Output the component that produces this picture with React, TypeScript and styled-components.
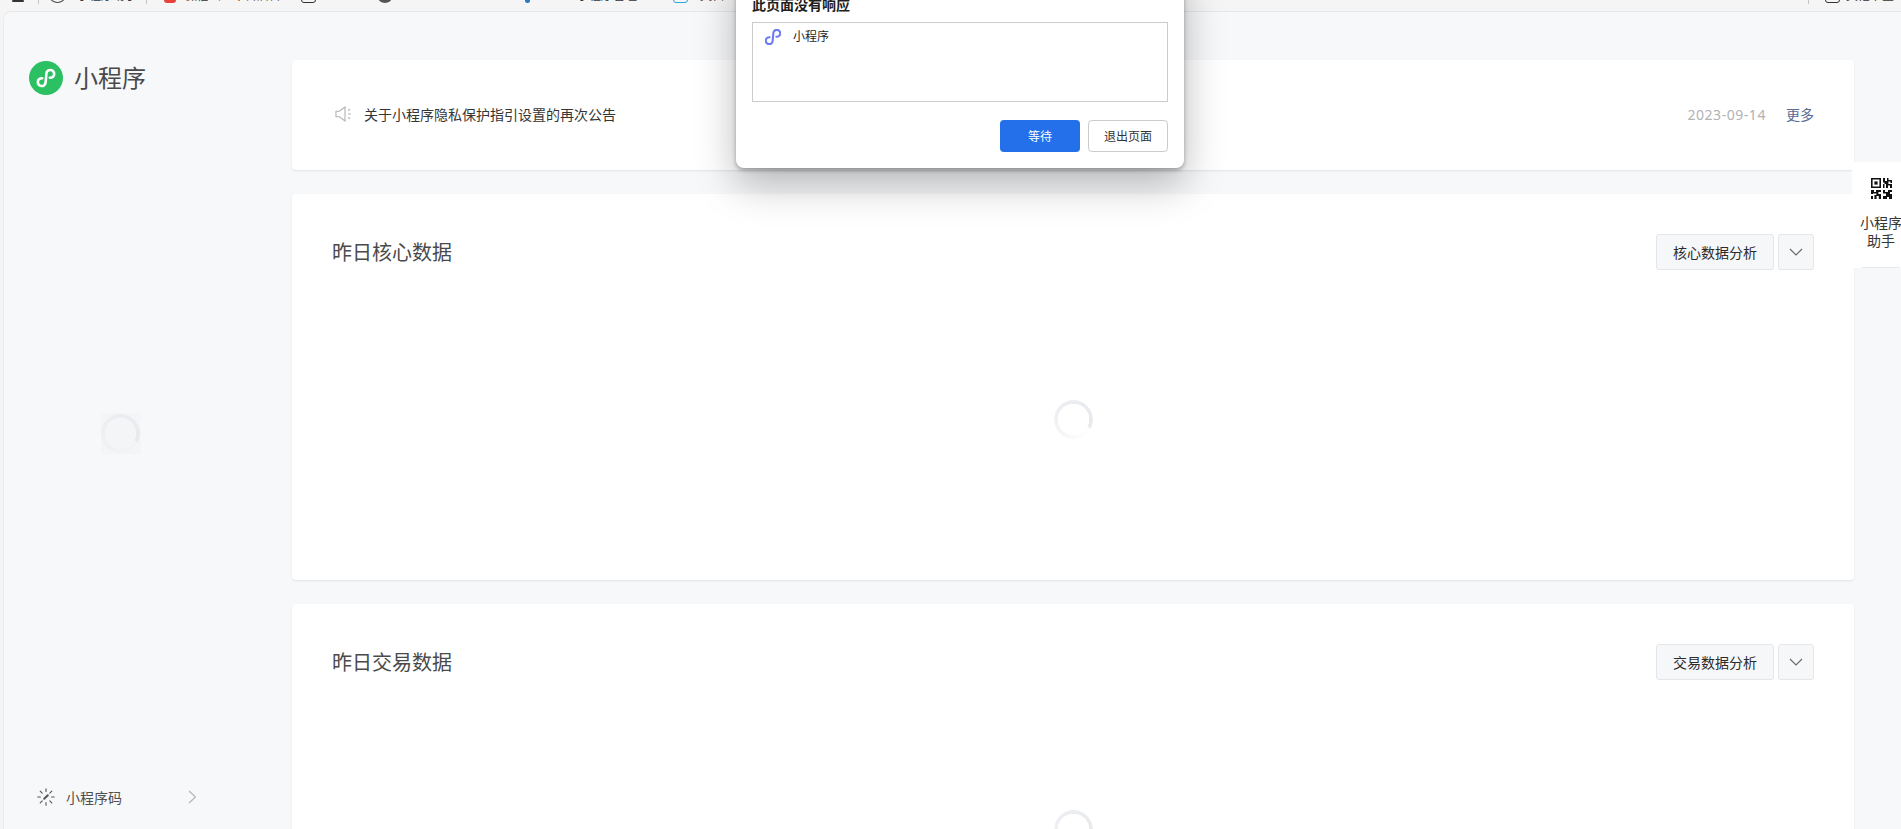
import React from 'react'
import styled, { createGlobalStyle } from 'styled-components'

const GlobalStyle = createGlobalStyle`
  html, body { margin: 0; padding: 0; background: #f5f5f5; }
  * { box-sizing: border-box; }
  body { font-family: "Noto Sans", "Noto Sans CJK SC", sans-serif; }
`

const Screen = styled.div`
  position: relative;
  width: 1901px;
  height: 829px;
  overflow: hidden;
  display: flex;
  flex-direction: column;
  background: #f5f5f5;
`

const BookmarkBar = styled.div`
  height: 11px;
  flex: none;
  display: flex;
  align-items: flex-start;
  overflow: hidden;
`

const BarSlot = styled.div<{ $gap: number; $auto?: boolean }>`
  margin-left: ${p => (p.$auto ? 'auto' : `${p.$gap}px`)};
  flex: none;
`

const BarSep = styled(BarSlot)`
  width: 1px;
  height: 4px;
  background: #c4c4c4;
`

const BarText = styled(BarSlot)<{ $w: number }>`
  width: ${p => p.$w}px;
  margin-top: -11px;
  height: 14px;
  font-size: 12px;
  line-height: 13px;
  color: #333;
  white-space: nowrap;
  overflow: hidden;
`

const BarIcon = styled(BarSlot)<{ $w: number; $h: number; $color: string; $outline?: boolean; $round?: boolean }>`
  width: ${p => p.$w}px;
  height: ${p => p.$h}px;
  margin-top: ${p => (p.$h < 5 ? 0 : -(p.$h - 3))}px;
  border-radius: ${p => (p.$round ? '50%' : '3px')};
  background: ${p => (p.$outline ? 'transparent' : p.$color)};
  border: ${p => (p.$outline ? `1px solid ${p.$color}` : 'none')};
`

const Page = styled.div`
  flex: 1;
  min-height: 0;
  margin-left: 3px;
  display: flex;
  background: #f7f8fa;
  border-top: 1px solid #e6e7e9;
  border-left: 1px solid #ececee;
  border-top-left-radius: 8px;
`

const Sidebar = styled.aside`
  width: 288px;
  flex: none;
  display: flex;
  flex-direction: column;
`

const Brand = styled.div`
  display: flex;
  align-items: center;
  gap: 11px;
  padding: 49px 0 0 25px;
`

const BrandBadge = styled.div`
  width: 34px;
  height: 34px;
  border-radius: 50%;
  background: #2bc162;
  display: flex;
  align-items: center;
  justify-content: center;
`

const BrandName = styled.h1`
  margin: 0;
  font-size: 24px;
  font-weight: 400;
  line-height: 34px;
  color: #4a4a4a;
`

const SideBody = styled.div`
  flex: 1;
  width: 233px;
  display: flex;
  align-items: center;
  justify-content: center;
`

const SpinnerBack = styled.div`
  width: 40px;
  height: 41px;
  background: #f4f5f7;
  display: flex;
  align-items: center;
  justify-content: center;
`

const Spinner = styled.div`
  width: 39px;
  height: 39px;
  border-radius: 50%;
  background: conic-gradient(from 118deg, rgba(236, 237, 241, 0) 0deg, rgba(236, 237, 241, 0.1) 20deg, rgba(236, 237, 241, 0.45) 90deg, #eceef1 190deg, #e8e9ed 360deg);
  -webkit-mask: radial-gradient(circle, transparent 15.5px, #000 16px);
  mask: radial-gradient(circle, transparent 15.5px, #000 16px);
`

const CodeRow = styled.div`
  height: 50px;
  margin-bottom: 7px;
  padding-left: 33px;
  display: flex;
  align-items: center;
  gap: 11px;
  font-size: 14px;
  color: #4f4f4f;
`

const CodeChevron = styled.svg`
  margin-left: 55px;
`

const Main = styled.main`
  flex: 1;
  min-width: 0;
  padding: 48px 47px 0 0;
  display: flex;
  flex-direction: column;
  gap: 24px;
`

const Card = styled.section`
  flex: none;
  background: #fff;
  border-radius: 4px;
  box-shadow: 0 1px 2px rgba(0, 0, 0, 0.09);
`

const NoticeCard = styled(Card)`
  height: 110px;
  padding: 0 40px 2px 43px;
  display: flex;
  align-items: center;
  font-size: 14px;
`

const NoticeText = styled.span`
  margin-left: 11px;
  color: #353535;
`

const NoticeDate = styled.span`
  margin-left: auto;
  color: #b2b2b2;
  letter-spacing: 0.55px;
`

const NoticeMore = styled.a`
  margin-left: 20px;
  color: #576b95;
`

const DataCard = styled(Card)`
  height: 386px;
  padding: 40px 40px 12px 40px;
  display: flex;
  flex-direction: column;
`

const CardHead = styled.header`
  height: 36px;
  flex: none;
  display: flex;
  align-items: center;
  gap: 4px;
`

const CardTitle = styled.h2`
  margin: -2px auto 0 0;
  font-size: 20px;
  font-weight: 400;
  color: #4a4a4a;
`

const GhostButton = styled.button<{ $square?: boolean }>`
  width: ${p => (p.$square ? 36 : 118)}px;
  height: 36px;
  padding: 0;
  display: flex;
  align-items: center;
  justify-content: center;
  font: inherit;
  font-size: 14px;
  color: #2b2b2b;
  background: #f6f7f9;
  border: 1px solid #e4e6e9;
  border-radius: 3px;
`

const CardBody = styled.div`
  flex: 1;
  display: flex;
  align-items: center;
  justify-content: center;
`

const HelperTab = styled.div`
  position: absolute;
  top: 162px;
  right: -9px;
  width: 58px;
  height: 106px;
  padding-top: 16px;
  background: #fff;
  display: flex;
  flex-direction: column;
  align-items: center;
  font-size: 14px;
  line-height: 18px;
  color: #353535;
  text-align: center;
  &::after {
    content: '';
    position: absolute;
    left: 10px;
    right: 10px;
    bottom: 0;
    height: 1px;
    background: #e8e9eb;
  }
`

const HelperLabel = styled.div`
  margin-top: 15px;
  white-space: nowrap;
`

const Dialog = styled.div`
  position: absolute;
  left: 736px;
  top: -30px;
  width: 448px;
  height: 198px;
  padding: 26px 16px 16px;
  background: #fff;
  border-radius: 8px;
  box-shadow: 0 2px 4px rgba(0, 0, 0, 0.3), 0 16px 40px rgba(0, 0, 0, 0.28);
  display: flex;
  flex-direction: column;
`

const DialogTitle = styled.div`
  height: 18px;
  font-size: 14px;
  line-height: 18px;
  font-weight: 700;
  color: #1f1f1f;
`

const ListBox = styled.div`
  margin-top: 8px;
  height: 80px;
  border: 1px solid #ccc;
  padding: 6px 12px;
`

const ListRow = styled.div`
  display: flex;
  align-items: center;
  gap: 12px;
  font-size: 12px;
  line-height: 16px;
  color: #1f1f1f;
`

const DialogActions = styled.div`
  margin-top: 18px;
  display: flex;
  justify-content: flex-end;
  gap: 8px;
`

const DialogButton = styled.button<{ $primary?: boolean }>`
  width: 80px;
  height: 32px;
  padding: 0;
  font: inherit;
  font-size: 12px;
  color: ${p => (p.$primary ? '#fff' : '#333')};
  background: ${p => (p.$primary ? '#2470ea' : '#fff')};
  border: ${p => (p.$primary ? 'none' : '1px solid #ccc')};
  border-radius: 4px;
`

const MiniMark = ({ size, color, width, box = '0 0 34 34' }: { size: number; color: string; width: number; box?: string }) => (
  <svg width={size} height={size} viewBox={box} fill="none">
    <path
      d="M13.2 17.6A3.9 3.9 0 1 0 17 21.5V12.5A3.9 3.9 0 1 1 20.8 16.4"
      stroke={color}
      strokeWidth={width}
      strokeLinecap="round"
      transform="rotate(5 17 17)"
    />
  </svg>
)

const SpeakerIcon = () => (
  <svg width="18" height="16" viewBox="0 0 18 16" fill="none" stroke="#b2b2b2" strokeWidth="1.1">
    <path d="M1 5.2h3.4L10 1v14l-5.6-4.2H1z" />
    <path d="M13 4.4l2.2-1.2M13 8h3M13 11.6l2.2 1.2" />
  </svg>
)

const BurstIcon = () => (
  <svg width="18" height="18" viewBox="0 0 18 18" fill="none" stroke="#555" strokeWidth="1.1" strokeLinecap="round">
    <path d="M9 .8v2.6M9 14.6v2.6M.8 9h2.6M14.6 9h2.6M3.2 3.2l2 2M12.8 12.8l2 2M3.2 14.8l2-2M12.8 5.2l2-2" />
    <path d="M7.2 10.8l3.6-3.6" strokeWidth="2" />
  </svg>
)

const RightChevron = () => (
  <CodeChevron width="9" height="14" viewBox="0 0 9 14" fill="none" stroke="#b2b2b2" strokeWidth="1.1">
    <path d="M1 1l6.5 6L1 13" />
  </CodeChevron>
)

const DownChevron = () => (
  <svg width="14" height="8" viewBox="0 0 14 8" fill="none" stroke="#666" strokeWidth="1.1">
    <path d="M1 1l6 6 6-6" />
  </svg>
)

const QrIcon = () => (
  <svg width="21" height="21" viewBox="0 0 21 21" fill="#111">
    <path fillRule="evenodd" d="M0 0h10v10H0zM1.6 1.6v6.8h6.8V1.6z" />
    <rect x="3.4" y="3.4" width="3.2" height="3.2" />
    <path d="M12 0h2v3h2V0h1.5v2H21v3h-1.6V3.6h-2V6H21v4h-2V7.6h-2V10h-2V6h-1.5v4H12V6h1.5V4.4H12z" />
    <path d="M0 12h3v2h2v-2h5v2H7.4v2H10v5H7.8v-3H5.6v3H3.4v-4h2v-1.6H2V16H0zM0 18h2v3H0z" />
    <path d="M12 12h2v2h3v-2h4v2h-2v2h2v5h-3v-2h-2v2h-4v-3h3v-2.4h-3z" />
  </svg>
)

const DataPanel = ({ title, action }: { title: string; action: string }) => (
  <DataCard>
    <CardHead>
      <CardTitle>{title}</CardTitle>
      <GhostButton>{action}</GhostButton>
      <GhostButton $square aria-label="展开"><DownChevron /></GhostButton>
    </CardHead>
    <CardBody><Spinner /></CardBody>
  </DataCard>
)

const App = () => (
  <Screen>
    <GlobalStyle />
    <BookmarkBar>
      <BarIcon $gap={12} $w={12} $h={2} $color="#333" />
      <BarSep $gap={14} />
      <BarIcon $gap={11} $w={15} $h={12} $color="#444" $outline $round />
      <BarText $gap={12} $w={55}>小程序助手</BarText>
      <BarSep $gap={14} />
      <BarIcon $gap={17} $w={12} $h={12} $color="#e8423f" />
      <BarText $gap={9} $w={97}>微信公众平台后台</BarText>
      <BarIcon $gap={19} $w={15} $h={12} $color="#333" $outline />
      <BarIcon $gap={62} $w={14} $h={12} $color="#555" $round />
      <BarIcon $gap={133} $w={5} $h={12} $color="#2b78c4" />
      <BarText $gap={47} $w={73}>小程序管理</BarText>
      <BarIcon $gap={23} $w={15} $h={12} $color="#2aa5e0" $outline />
      <BarText $gap={12} $w={40}>文档</BarText>
      <BarSep $gap={0} $auto />
      <BarIcon $gap={16} $w={15} $h={12} $color="#333" $outline />
      <BarText $gap={6} $w={55}>其他书签</BarText>
    </BookmarkBar>
    <Page>
      <Sidebar>
        <Brand>
          <BrandBadge><MiniMark size={34} color="#fff" width={2.6} /></BrandBadge>
          <BrandName>小程序</BrandName>
        </Brand>
        <SideBody>
          <SpinnerBack><Spinner /></SpinnerBack>
        </SideBody>
        <CodeRow>
          <BurstIcon />
          <span>小程序码</span>
          <RightChevron />
        </CodeRow>
      </Sidebar>
      <Main>
        <NoticeCard>
          <SpeakerIcon />
          <NoticeText>关于小程序隐私保护指引设置的再次公告</NoticeText>
          <NoticeDate>2023-09-14</NoticeDate>
          <NoticeMore>更多</NoticeMore>
        </NoticeCard>
        <DataPanel title="昨日核心数据" action="核心数据分析" />
        <DataPanel title="昨日交易数据" action="交易数据分析" />
      </Main>
    </Page>
    <HelperTab>
      <QrIcon />
      <HelperLabel>小程序<br />助手</HelperLabel>
    </HelperTab>
    <Dialog>
      <DialogTitle>此页面没有响应</DialogTitle>
      <ListBox>
        <ListRow>
          <MiniMark size={16} color="#6b7cf0" width={2.4} box="8 8 18 18" />
          <span>小程序</span>
        </ListRow>
      </ListBox>
      <DialogActions>
        <DialogButton $primary>等待</DialogButton>
        <DialogButton>退出页面</DialogButton>
      </DialogActions>
    </Dialog>
  </Screen>
)

export default App
